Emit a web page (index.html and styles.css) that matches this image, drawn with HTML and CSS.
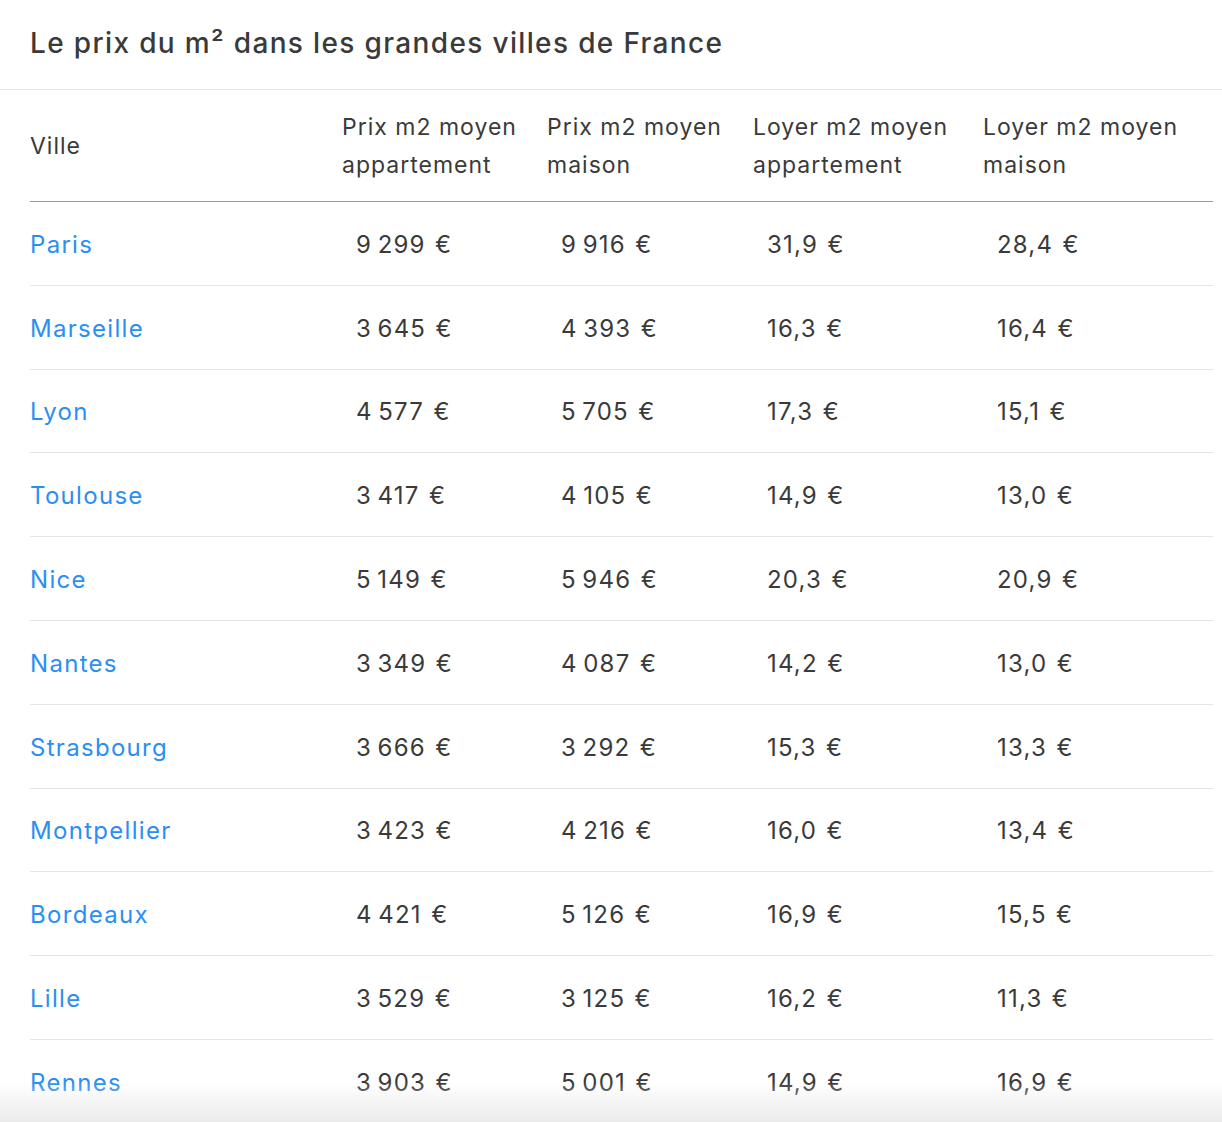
FILE: index.html
```html
<!DOCTYPE html>
<html lang="fr">
<head>
<meta charset="utf-8">
<title>Le prix du m² dans les grandes villes de France</title>
<link rel="stylesheet" href="styles.css">
</head>
<body>
<div class="card">
  <h2 class="title">Le prix du m² dans les grandes villes de France</h2>
  <div class="body">
    <table class="prices">
      <colgroup>
        <col class="c-ville"><col class="c-2"><col class="c-3"><col class="c-4"><col class="c-5">
      </colgroup>
      <thead>
        <tr>
          <th class="first">Ville</th>
          <th>Prix m2 moyen appartement</th>
          <th>Prix m2 moyen maison</th>
          <th>Loyer m2 moyen appartement</th>
          <th>Loyer m2 moyen maison</th>
        </tr>
      </thead>
      <tbody>
        <tr><td class="first"><a href="#">Paris</a></td><td>9&#8201;299 €</td><td>9&#8201;916 €</td><td>31,9 €</td><td>28,4 €</td></tr>
        <tr><td class="first"><a href="#">Marseille</a></td><td>3&#8201;645 €</td><td>4&#8201;393 €</td><td>16,3 €</td><td>16,4 €</td></tr>
        <tr><td class="first"><a href="#">Lyon</a></td><td>4&#8201;577 €</td><td>5&#8201;705 €</td><td>17,3 €</td><td>15,1 €</td></tr>
        <tr><td class="first"><a href="#">Toulouse</a></td><td>3&#8201;417 €</td><td>4&#8201;105 €</td><td>14,9 €</td><td>13,0 €</td></tr>
        <tr><td class="first"><a href="#">Nice</a></td><td>5&#8201;149 €</td><td>5&#8201;946 €</td><td>20,3 €</td><td>20,9 €</td></tr>
        <tr><td class="first"><a href="#">Nantes</a></td><td>3&#8201;349 €</td><td>4&#8201;087 €</td><td>14,2 €</td><td>13,0 €</td></tr>
        <tr><td class="first"><a href="#">Strasbourg</a></td><td>3&#8201;666 €</td><td>3&#8201;292 €</td><td>15,3 €</td><td>13,3 €</td></tr>
        <tr><td class="first"><a href="#">Montpellier</a></td><td>3&#8201;423 €</td><td>4&#8201;216 €</td><td>16,0 €</td><td>13,4 €</td></tr>
        <tr><td class="first"><a href="#">Bordeaux</a></td><td>4&#8201;421 €</td><td>5&#8201;126 €</td><td>16,9 €</td><td>15,5 €</td></tr>
        <tr><td class="first"><a href="#">Lille</a></td><td>3&#8201;529 €</td><td>3&#8201;125 €</td><td>16,2 €</td><td>11,3 €</td></tr>
        <tr><td class="first"><a href="#">Rennes</a></td><td>3&#8201;903 €</td><td>5&#8201;001 €</td><td>14,9 €</td><td>16,9 €</td></tr>
      </tbody>
    </table>
  </div>
</div>
<div class="fade"></div>
</body>
</html>
```

FILE: styles.css
```css
html, body {
  margin: 0;
  padding: 0;
  background: #fff;
}
body {
  font-family: Inter, "Open Sans", sans-serif;
  color: #3a3a3a;
  overflow: hidden;
}
.title {
  margin: 0;
  height: 90px;
  box-sizing: border-box;
  padding: 0 30px 3px;
  display: flex;
  align-items: center;
  font-size: 28px;
  font-weight: 500;
  letter-spacing: 1.35px;
  color: #3a3a3a;
  border-bottom: 1px solid #e3e3e3;
}
.body {
  padding: 0 9px 0 30px;
}
.prices {
  width: 1183px;
  border-collapse: collapse;
  table-layout: fixed;
}
.c-ville { width: 298px; }
.c-2 { width: 205px; }
.c-3 { width: 206px; }
.c-4 { width: 230px; }
.c-5 { width: 244px; }
.prices th {
  text-align: left;
  font-weight: 400;
  font-size: 23px;
  letter-spacing: 1px;
  line-height: 38px;
  padding: 18px 10px 17px 14px;
  vertical-align: middle;
  border-bottom: 1px solid #999;
  color: #3a3a3a;
  white-space: normal;
}
.prices th.first,
.prices td.first {
  padding-left: 0;
}
.prices td {
  height: 83.8px;
  box-sizing: border-box;
  padding: 2px 4px 0 28px;
  font-size: 24px;
  letter-spacing: 1.2px;
  word-spacing: 1.5px;
  border-bottom: 1px solid #e5e5e5;
  vertical-align: middle;
  white-space: nowrap;
}
.prices td.first {
  letter-spacing: 1.3px;
  word-spacing: 0;
}
.prices a {
  color: #2b8ef3;
  text-decoration: none;
}
.fade {
  position: fixed;
  left: 0;
  right: 0;
  bottom: 0;
  height: 40px;
  background: linear-gradient(to bottom, rgba(235,235,235,0), rgba(235,235,235,1));
  pointer-events: none;
}
```
